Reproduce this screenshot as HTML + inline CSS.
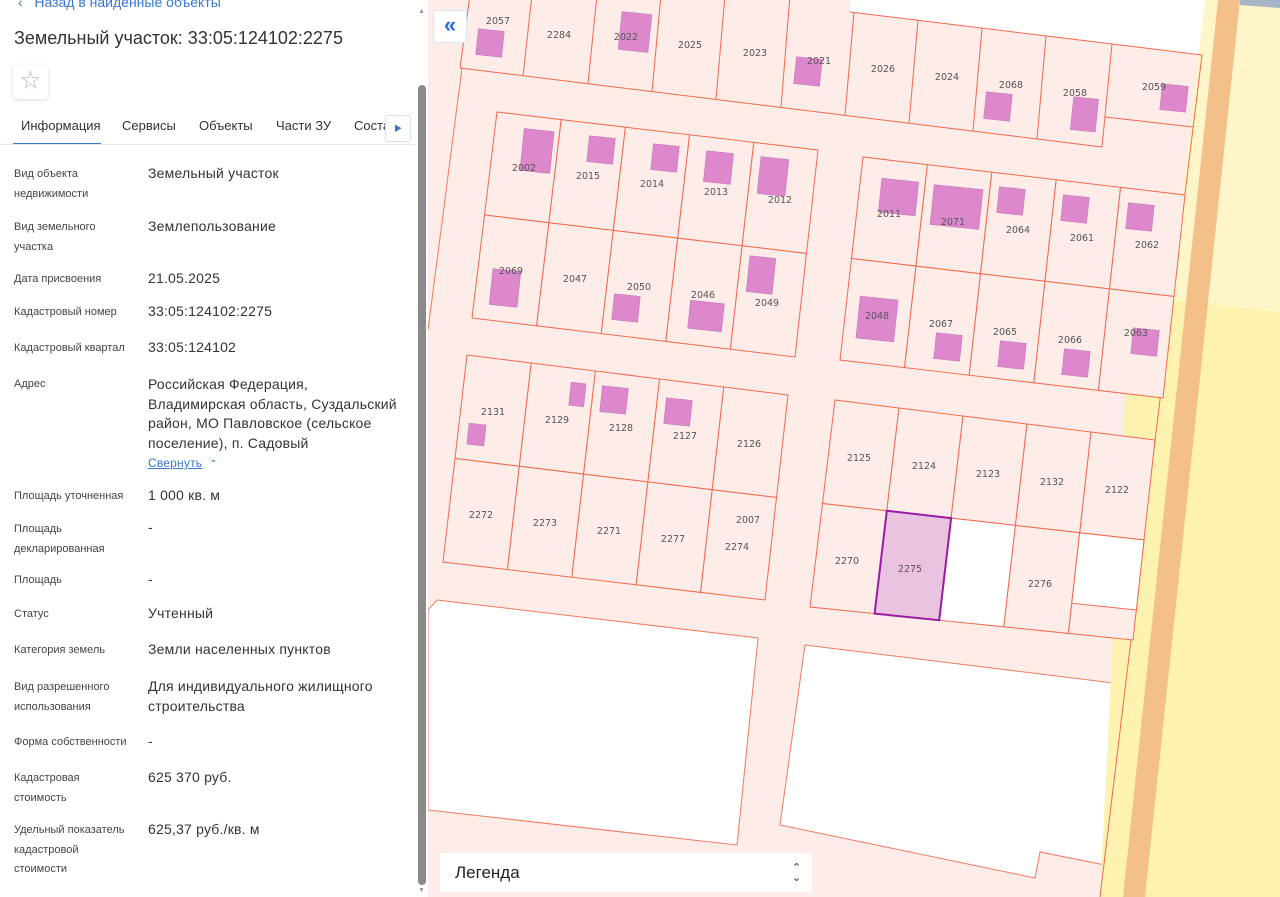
<!DOCTYPE html>
<html><head><meta charset="utf-8">
<style>
*{margin:0;padding:0;box-sizing:border-box}
body{width:1280px;height:897px;overflow:hidden;position:relative;font-family:"Liberation Sans","Noto Sans CJK SC",sans-serif;background:#fff;color:#333}
#panel{position:absolute;left:0;top:0;width:428px;height:897px;background:#fff}
.l{position:absolute;left:14px;font-size:11px;line-height:19.5px;color:#444;width:125px}
.v{position:absolute;left:148px;font-size:14px;line-height:19.5px;color:#333;width:260px;letter-spacing:.2px}
.tab{position:absolute;top:118px;font-size:13px;color:#333}
#map{position:absolute;left:428px;top:0;width:852px;height:897px;overflow:hidden;background:#fdece8}
</style></head><body>
<div id="panel">
 <div style="position:absolute;left:18px;top:-6px;font-size:14px;color:#3a78d0">‹&nbsp;&nbsp;&nbsp;Назад в найденные объекты</div>
 <div style="position:absolute;left:14px;top:28px;font-size:18px;color:#333">Земельный участок: 33:05:124102:2275</div>
 <div style="position:absolute;left:13px;top:65px;width:35px;height:34px;border-radius:4px;box-shadow:0 1px 4px rgba(0,0,0,.15);color:#bbb;font-size:20px;text-align:center;line-height:33px">☆</div>
 <div class="tab" style="left:21px">Информация</div>
 <div class="tab" style="left:122px">Сервисы</div>
 <div class="tab" style="left:199px">Объекты</div>
 <div class="tab" style="left:276px">Части ЗУ</div>
 <div class="tab" style="left:354px">Соста</div>
 <div style="position:absolute;left:13px;top:143px;width:88px;height:2px;background:#3a78d0"></div>
 <div style="position:absolute;left:0;top:144px;width:415px;height:1px;background:#e6e6e6"></div>
 <div style="position:absolute;left:385px;top:115px;width:26px;height:27px;background:#fff;border:1px solid #d6e2f3;border-radius:3px;color:#3a78d0;font-size:8px;text-align:center;line-height:26px">▶</div>
 <div style="position:absolute;left:418px;top:85px;width:8px;height:800px;background:#8a8a8a;border-radius:4px"></div>
 <div style="position:absolute;left:418px;top:8px;font-size:7px;color:#999">▲</div>
 <div style="position:absolute;left:418px;top:887px;font-size:7px;color:#999">▼</div>

 <div class="l" style="top:165px">Вид объекта<br>недвижимости</div><div class="v" style="top:164px">Земельный участок</div>
 <div class="l" style="top:218px">Вид земельного<br>участка</div><div class="v" style="top:217px">Землепользование</div>
 <div class="l" style="top:270px">Дата присвоения</div><div class="v" style="top:269px">21.05.2025</div>
 <div class="l" style="top:303px">Кадастровый номер</div><div class="v" style="top:302px">33:05:124102:2275</div>
 <div class="l" style="top:339px">Кадастровый квартал</div><div class="v" style="top:338px">33:05:124102</div>
 <div class="l" style="top:375px">Адрес</div><div class="v" style="top:375px">Российская Федерация, Владимирская область, Суздальский район, МО Павловское (сельское поселение), п. Садовый<br><span style="font-size:12px;color:#3a78d0;text-decoration:underline">Свернуть</span> <span style="font-size:10px;color:#3a78d0">&nbsp;⌃</span></div>
 <div class="l" style="top:487px">Площадь уточненная</div><div class="v" style="top:486px">1 000 кв. м</div>
 <div class="l" style="top:520px">Площадь<br>декларированная</div><div class="v" style="top:518px">-</div>
 <div class="l" style="top:571px">Площадь</div><div class="v" style="top:570px">-</div>
 <div class="l" style="top:605px">Статус</div><div class="v" style="top:604px">Учтенный</div>
 <div class="l" style="top:641px">Категория земель</div><div class="v" style="top:640px">Земли населенных пунктов</div>
 <div class="l" style="top:678px">Вид разрешенного<br>использования</div><div class="v" style="top:677px">Для индивидуального жилищного строительства</div>
 <div class="l" style="top:733px">Форма собственности</div><div class="v" style="top:732px">-</div>
 <div class="l" style="top:769px">Кадастровая<br>стоимость</div><div class="v" style="top:768px">625 370 руб.</div>
 <div class="l" style="top:821px">Удельный показатель<br>кадастровой<br>стоимости</div><div class="v" style="top:820px">625,37 руб./кв. м</div>
</div>

<div id="map">
<svg id="s" width="852" height="897" viewBox="428 0 852 897" xmlns="http://www.w3.org/2000/svg" style="position:absolute;left:0;top:0">
 <rect x="428" y="0" width="852" height="897" fill="#fdece8"/>
 <polygon points="850,0 1215,0 1205,55 850,12" fill="#fff"/>
 <polygon points="437,600 758,638 737,845 428,810 428,610" fill="#fff" stroke="#ef7a60" stroke-width="1"/>
 <polygon points="805,645 1130,685 1110,868 1105,865 1040,852 1035,878 780,825" fill="#fff" stroke="#ef7a60" stroke-width="1"/>
 <polygon points="1205,0 1280,0 1280,897 1100,897" fill="#fef6c8"/>
 <polygon points="1172,300 1280,312 1280,897 1100,897 1130,300" fill="#fdf2b0"/>
 <polygon points="1218,0 1240,0 1145,897 1123,897" fill="#f4c08a"/>
 <polygon points="1240,0 1280,0 1280,8 1240,5" fill="#a8b4c8"/>
 <line x1="462" y1="68" x2="428" y2="330" stroke="#ef7a60"/>
 <line x1="460" y1="68" x2="1102" y2="147" stroke="#ef6a4e"/>
 <line x1="850" y1="12" x2="1202" y2="55" stroke="#ef6a4e"/>
 <line x1="1202" y1="55" x2="1172" y2="300" stroke="#ef6a4e"/>
 <line x1="1105" y1="117" x2="1193" y2="127" stroke="#ef6a4e"/>
 <line x1="1172" y1="300" x2="1100" y2="897" stroke="#ef6a4e"/>
 <g id="g"></g>
 <g fill="#dd88cc" stroke="#c070b0" stroke-width=".5">
  <rect x="477" y="30" width="26" height="26" transform="rotate(6 490 43)"/>
  <rect x="620" y="13" width="30" height="38" transform="rotate(6 635 32)"/>
  <rect x="795" y="58" width="26" height="27" transform="rotate(6 808 71)"/>
  <rect x="985" y="93" width="26" height="27" transform="rotate(6 998 106)"/>
  <rect x="1072" y="98" width="25" height="33" transform="rotate(6 1085 114)"/>
  <rect x="1161" y="85" width="26" height="26" transform="rotate(6 1174 98)"/>
  <rect x="522" y="130" width="30" height="42" transform="rotate(6 537 151)"/>
  <rect x="588" y="137" width="26" height="26" transform="rotate(6 601 150)"/>
  <rect x="652" y="145" width="26" height="26" transform="rotate(6 665 158)"/>
  <rect x="705" y="152" width="27" height="31" transform="rotate(6 718 167)"/>
  <rect x="759" y="158" width="28" height="37" transform="rotate(6 773 176)"/>
  <rect x="491" y="270" width="28" height="36" transform="rotate(6 505 288)"/>
  <rect x="613" y="295" width="26" height="26" transform="rotate(6 626 308)"/>
  <rect x="689" y="302" width="34" height="28" transform="rotate(6 706 316)"/>
  <rect x="748" y="257" width="26" height="36" transform="rotate(6 761 275)"/>
  <rect x="880" y="180" width="37" height="34" transform="rotate(6 898 197)"/>
  <rect x="932" y="187" width="49" height="40" transform="rotate(6 956 207)"/>
  <rect x="998" y="188" width="26" height="26" transform="rotate(6 1011 201)"/>
  <rect x="1062" y="196" width="26" height="26" transform="rotate(6 1075 209)"/>
  <rect x="1127" y="204" width="26" height="26" transform="rotate(6 1140 217)"/>
  <rect x="858" y="298" width="38" height="42" transform="rotate(6 877 319)"/>
  <rect x="935" y="334" width="26" height="26" transform="rotate(6 948 347)"/>
  <rect x="999" y="342" width="26" height="26" transform="rotate(6 1012 355)"/>
  <rect x="1063" y="350" width="26" height="26" transform="rotate(6 1076 363)"/>
  <rect x="1132" y="329" width="26" height="26" transform="rotate(6 1145 342)"/>
  <rect x="468" y="424" width="17" height="21" transform="rotate(6 476 434)"/>
  <rect x="570" y="383" width="15" height="23" transform="rotate(6 577 394)"/>
  <rect x="601" y="387" width="26" height="26" transform="rotate(6 614 400)"/>
  <rect x="665" y="399" width="26" height="26" transform="rotate(6 678 412)"/>
 </g>
 <g font-family="DejaVu Sans, sans-serif" font-size="9.5" fill="#555" text-anchor="middle">
  <text x="498" y="24">2057</text><text x="559" y="38">2284</text><text x="626" y="40">2022</text><text x="690" y="48">2025</text><text x="755" y="56">2023</text><text x="819" y="64">2021</text><text x="883" y="72">2026</text><text x="947" y="80">2024</text><text x="1011" y="88">2068</text><text x="1075" y="96">2058</text><text x="1154" y="90">2059</text>
  <text x="524" y="171">2002</text><text x="588" y="179">2015</text><text x="652" y="187">2014</text><text x="716" y="195">2013</text><text x="780" y="203">2012</text>
  <text x="511" y="274">2069</text><text x="575" y="282">2047</text><text x="639" y="290">2050</text><text x="703" y="298">2046</text><text x="767" y="306">2049</text>
  <text x="889" y="217">2011</text><text x="953" y="225">2071</text><text x="1018" y="233">2064</text><text x="1082" y="241">2061</text><text x="1147" y="248">2062</text>
  <text x="877" y="319">2048</text><text x="941" y="327">2067</text><text x="1005" y="335">2065</text><text x="1070" y="343">2066</text><text x="1136" y="336">2063</text>
  <text x="493" y="415">2131</text><text x="557" y="423">2129</text><text x="621" y="431">2128</text><text x="685" y="439">2127</text><text x="749" y="447">2126</text>
  <text x="481" y="518">2272</text><text x="545" y="526">2273</text><text x="609" y="534">2271</text><text x="673" y="542">2277</text><text x="737" y="550">2274</text><text x="748" y="523">2007</text>
  <text x="859" y="461">2125</text><text x="924" y="469">2124</text><text x="988" y="477">2123</text><text x="1052" y="485">2132</text><text x="1117" y="493">2122</text>
  <text x="847" y="564">2270</text><text x="910" y="572">2275</text><text x="1040" y="587">2276</text>
 </g>
</svg>
<div style="position:absolute;left:5px;top:10px;width:34px;height:33px;background:#fff;border:1px solid #dde5f0;border-radius:3px;color:#2a6fd0;font-size:22px;text-align:center;line-height:28px;font-weight:bold">«</div>
<div style="position:absolute;left:12px;top:853px;width:372px;height:39px;background:#fff;font-size:17px;color:#222;line-height:39px;padding-left:15px">Легенда<span style="position:absolute;left:352px;top:0;font-size:11px;color:#333;line-height:10px;padding-top:10px">⌃<br>⌄</span></div>
</div>
<script>
var g=document.getElementById('g'),NS='http://www.w3.org/2000/svg';
function L(a,b,c,d){return [a[0]+(b[0]-a[0])*c, a[1]+(b[1]-a[1])*c];}
function P(q,u,v){var t=L(q[0],q[1],u),b=L(q[3],q[2],u);return L(t,b,v);}
function poly(pts,fill,stroke,w){var p=document.createElementNS(NS,'polygon');p.setAttribute('points',pts.map(function(x){return x.join(',')}).join(' '));p.setAttribute('fill',fill);p.setAttribute('stroke',stroke);p.setAttribute('stroke-width',w||1);g.appendChild(p);}
function cell(q,u0,u1,v0,v1,f,s,w){poly([P(q,u0,v0),P(q,u1,v0),P(q,u1,v1),P(q,u0,v1)],f,s,w);}
var blocks=[[[497,112],[818,150],[795,357],[472,318]],[[863,157],[1185,195],[1163,398],[840,360]],[[467,355],[788,395],[765,600],[443,562]],[[835,400],[1155,440],[1133,640],[810,607]]];
blocks.forEach(function(q,bi){for(var i=0;i<5;i++)for(var j=0;j<2;j++){var f='#fdece8';if(bi==3&&j==1&&i==2)f='#fff';cell(q,i/5,(i+1)/5,j/2,(j+1)/2,f,'#ef6a4e',1);}});
cell(blocks[3],0.8,1,0.5,0.85,'#fff','#ef6a4e',1);
cell(blocks[3],0.2,0.4,0.5,1,'#e9c3e0','#9a1aa8',2);
var xs=[[470,460],[532,523],[597,588],[661,652],[725,716],[790,781],[854,845],[918,909],[982,973],[1046,1037],[1112,1102]];
xs.forEach(function(x){var l=document.createElementNS(NS,'line');var yb=68+(x[1]-460)*0.123;var yt=x[0]>850?12+(x[0]-850)*0.122:-5;l.setAttribute('x1',x[0]);l.setAttribute('y1',yt);l.setAttribute('x2',x[1]);l.setAttribute('y2',yb);l.setAttribute('stroke','#ef6a4e');g.appendChild(l);});
</script>
</body></html>
